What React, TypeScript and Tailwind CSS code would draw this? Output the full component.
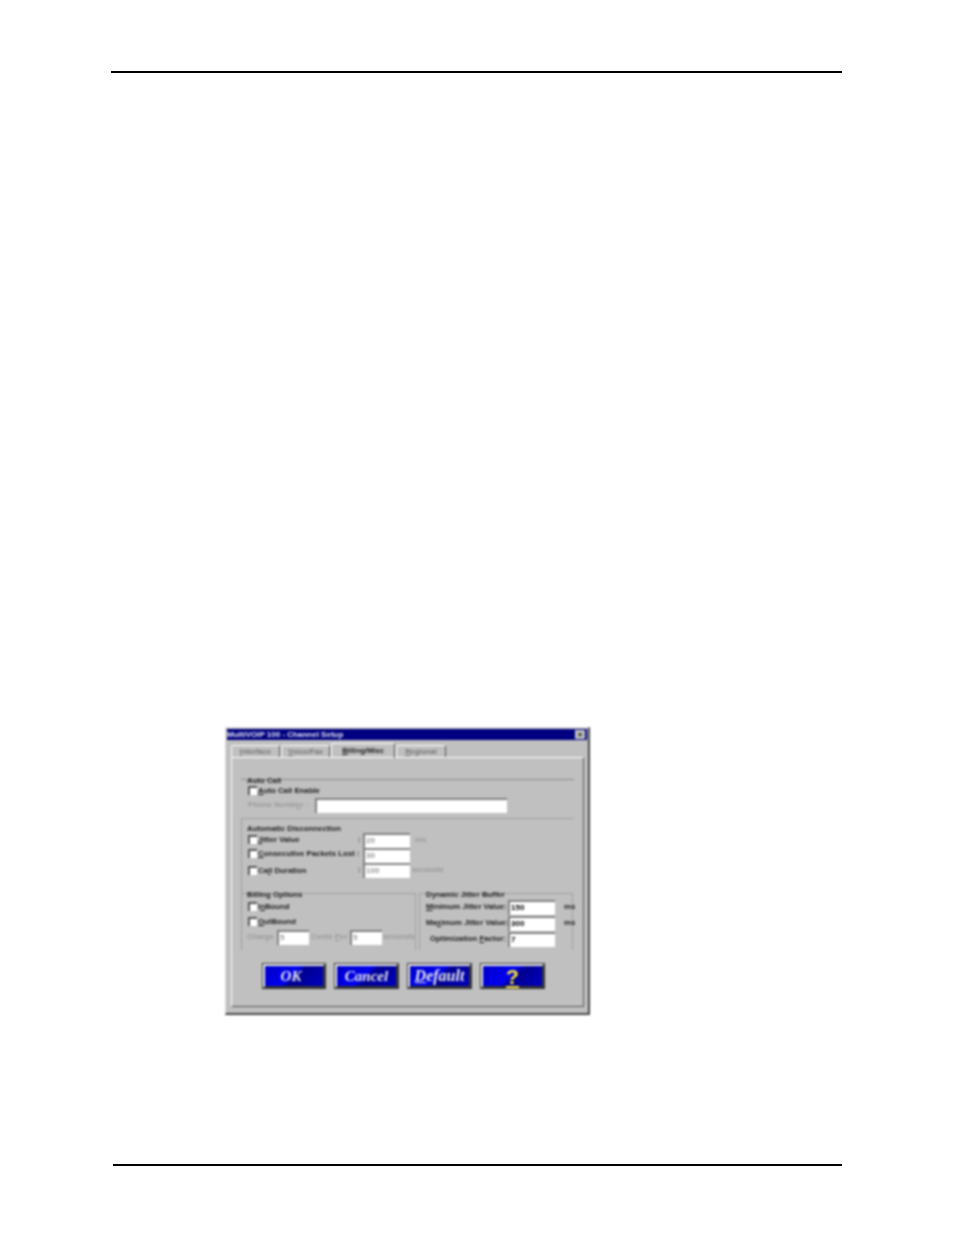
import type { ReactNode } from 'react'

const label = 'text-[7.8px] leading-none font-bold text-[#1c1c1c] whitespace-nowrap'
const muted = 'text-[7.8px] leading-none font-bold text-[#9a9a9a] whitespace-nowrap'
const well = 'h-[15px] shrink-0 bg-white border-t-2 border-l-2 border-t-[#808080] border-l-[#808080] text-[8px] leading-[11px] pl-[1px] font-bold'
const blue = 'flex h-[24px] items-center justify-center border-2 border-t-[#eeeeee] border-l-[#eeeeee] border-r-[#333333] border-b-[#333333] bg-[linear-gradient(135deg,#0000c8_0%,#0000f0_45%,#000090_55%,#0000c0_100%)] outline outline-1 outline-[#333333]'

function CheckRow({ children, className = '' }: { children: ReactNode; className?: string }) {
  return (
    <div className={`ml-[1px] flex items-start gap-[1px] ${className}`}>
      <span className="h-[9px] w-[9px] shrink-0 bg-white border-t-2 border-l-2 border-t-[#555555] border-l-[#555555]" />
      <span className="text-[7.8px] leading-[9px] font-bold text-[#1c1c1c] whitespace-nowrap">{children}</span>
    </div>
  )
}

function Tab({ children, active }: { children: ReactNode; active?: boolean }) {
  return (
    <div
      className={`flex items-center justify-center rounded-t-[2px] border border-b-0 border-t-white border-l-white border-r-[#555555] text-[7.5px] leading-none font-bold ${
        active ? 'relative z-10 -mb-[1px] h-[15px] text-[#1c1c1c]' : 'h-[12px] text-[#777777]'
      }`}
    >
      {children}
    </div>
  )
}

function BlueButton({ children, width, size = 'text-[15px]', pad = '' }: { children: ReactNode; width: string; size?: string; pad?: string }) {
  return (
    <div className={`${blue} ${width} ${pad}`}>
      <span className={`font-['Liberation_Serif',serif] ${size} leading-none font-bold italic text-[#e8e8e8]`}>{children}</span>
    </div>
  )
}

export default function App() {
  return (
    <div className="relative h-[1235px] w-[954px] overflow-hidden bg-white font-['Liberation_Sans',Arial,sans-serif]">
      <div className="ml-[111px] w-[731px] pt-[71px]">
        <div className="h-[2px] bg-black" />
      </div>

      {/* dialog screenshot */}
      <div className="mt-[654px] ml-[225px] h-[288px] w-[365px] border-r-2 border-b-2 border-r-[#444444] border-b-[#444444] border-t border-l border-t-[#dddddd] border-l-[#dddddd] bg-[#c0c0c0] px-[1px] pt-[1px] blur-[0.8px]">
        <div className="flex h-[11px] items-center justify-between bg-[#000080] pr-[2px]">
          <span className="text-[8px] leading-none font-bold text-[#e4e4f4]">MultiVOIP 100 - Channel Setup</span>
          <span className="flex h-[9px] w-[10px] items-center justify-center bg-[#c0c0c0] text-[8px] leading-none font-bold text-black">×</span>
        </div>

        <div className="mt-[3px] ml-[4px] flex h-[14px] items-end gap-[1px]">
          <div className="w-[49px]"><Tab><u>I</u>nterface</Tab></div>
          <div className="w-[49px]"><Tab><u>V</u>oice/Fax</Tab></div>
          <div className="w-[64px]"><Tab active><u>B</u>illing/Misc</Tab></div>
          <div className="w-[50px]"><Tab><u>R</u>egional</Tab></div>
        </div>

        <div className="ml-[4px] h-[250px] w-[353px] border border-t-white border-l-white border-r-[#555555] border-b-[#555555] px-[9px] pt-[21px]">
          {/* Auto Call */}
          <div className="h-[39px] border-t border-[#8a8a8a] pl-[6px]">
            <div className={`${label} -mt-[3px]`}>Auto Call</div>
            <CheckRow className="mt-[1px]"><u>A</u>uto Call Enable</CheckRow>
            <div className="mt-[3px] flex items-center">
              <span className={`${muted} w-[68px] pl-[1px]`}>Phone Numb<u>e</u>r :</span>
              <div className={`${well} w-[192px]`} />
            </div>
          </div>

          {/* Automatic Disconnection */}
          <div className="h-[75px] border-t border-l border-[#a0a0a0] pt-[6px] pl-[5px]">
            <div className={label}>Automatic Disconnection</div>
            <div className="flex h-[15px] items-center">
              <div className="-mt-[2px] w-[111px]"><CheckRow><u>J</u>itter Value</CheckRow></div>
              <span className={`${label} w-[5px]`}>:</span>
              <div className={`${well} w-[47px] text-[#999999]`}>20</div>
              <span className={`${muted} ml-[5px]`}>ms</span>
            </div>
            <div className="flex h-[15px] items-center">
              <div className="-mt-[4px] w-[116px]"><CheckRow><u>C</u>onsecutive Packets Lost :</CheckRow></div>
              <div className={`${well} w-[47px] text-[#999999]`}>30</div>
            </div>
            <div className="flex h-[15px] items-center">
              <div className="w-[111px]"><CheckRow>Ca<u>l</u>l Duration</CheckRow></div>
              <span className={`${label} w-[5px]`}>:</span>
              <div className={`${well} w-[47px] text-[#999999]`}>100</div>
              <span className={`${muted} ml-[2px]`}>seconds</span>
            </div>
          </div>

          <div className="flex h-[57px] gap-[3px]">
            {/* Billing Options */}
            <div className="h-[57px] w-[175px] border-t border-l border-r border-[#a0a0a0] pl-[5px]">
              <div className={`${label} -mt-[3px]`}>Billing Options</div>
              <CheckRow className="mt-[3px]">I<u>n</u>Bound</CheckRow>
              <CheckRow className="mt-[6px]"><u>O</u>utBound</CheckRow>
              <div className="mt-[4px] flex items-center">
                <span className={`${muted} w-[30px]`}>Charge</span>
                <div className={`${well} w-[32px] text-[#999999]`}>5</div>
                <span className={`${muted} w-[41px] pl-[2px]`}>Cents <u>P</u>er</span>
                <div className={`${well} w-[32px] text-[#999999]`}>5</div>
                <span className={`${muted} ml-[1px]`}>seconds</span>
              </div>
            </div>

            {/* Dynamic Jitter Buffer */}
            <div className="h-[57px] w-[154px] border-t border-l border-r border-[#a0a0a0] pl-[6px]">
              <div className={`${label} -mt-[3px]`}>Dynamic Jitter Buffer</div>
              <div className="mt-[1px] flex h-[15px] items-center">
                <span className={`${label} w-[82px] shrink-0`}><u>M</u>inimum Jitter Value:</span>
                <div className={`${well} w-[47px] text-black`}>150</div>
                <span className={`${label} ml-[9px]`}>ms</span>
              </div>
              <div className="mt-[1px] flex h-[15px] items-center">
                <span className={`${label} w-[82px] shrink-0`}>Ma<u>x</u>imum Jitter Value:</span>
                <div className={`${well} w-[47px] text-black`}>300</div>
                <span className={`${label} ml-[9px]`}>ms</span>
              </div>
              <div className="mt-[1px] flex h-[15px] items-center">
                <span className={`${label} w-[82px] shrink-0 pl-[4px]`}>Optimization <u>F</u>actor:</span>
                <div className={`${well} w-[47px] text-black`}>7</div>
              </div>
            </div>
          </div>

          {/* buttons */}
          <div className="mt-[14px] ml-[22px] flex gap-[10px]">
            <BlueButton width="w-[62px]" pad="pr-[6px]">OK</BlueButton>
            <BlueButton width="w-[63px]">Cancel</BlueButton>
            <BlueButton width="w-[63px]" size="text-[16px]"><u>D</u>efault</BlueButton>
            <div className={`${blue} w-[63px]`}>
              <span className="text-[21px] leading-none font-bold text-[#ffee30] underline">?</span>
            </div>
          </div>
        </div>
      </div>

      <div className="mt-[149px] ml-[113px] h-[2px] w-[729px] bg-black" />
    </div>
  )
}
